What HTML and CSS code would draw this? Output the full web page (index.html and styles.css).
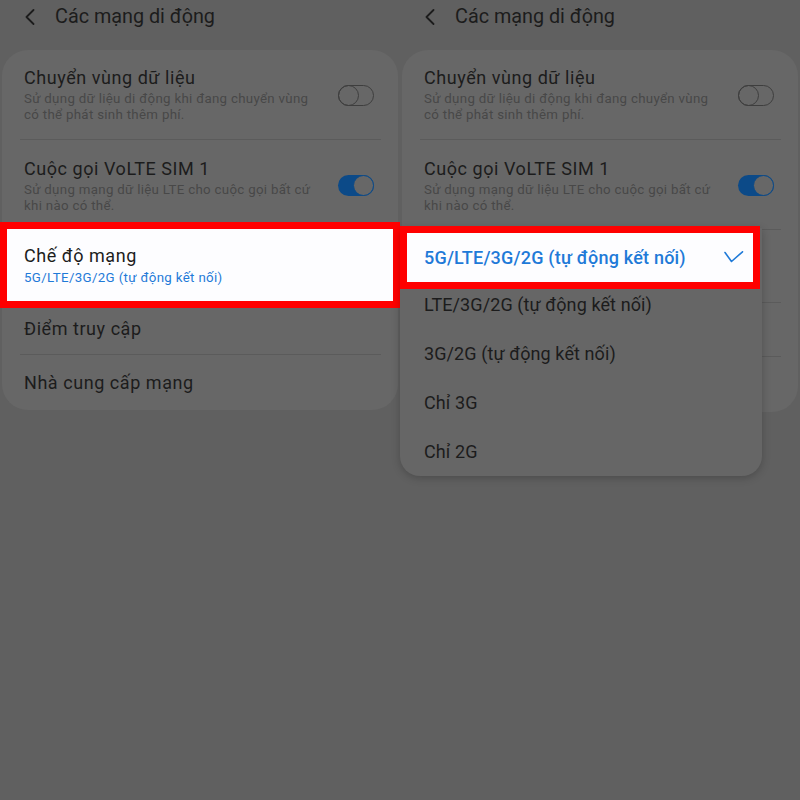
FILE: index.html
```html
<!DOCTYPE html>
<html lang="vi">
<head>
<meta charset="utf-8">
<title>Các mạng di động</title>
<link rel="stylesheet" href="styles.css">
</head>
<body>
<div class="screen">
  <section class="panel">
    <header class="header">
      <svg class="back" width="12" height="16" viewBox="0 0 12 16"><path d="M9.5 1 L2.5 8 L9.5 15" fill="none" stroke="#1c1c1c" stroke-width="1.8" stroke-linecap="round" stroke-linejoin="round"/></svg>
      <h1 class="title">Các mạng di động</h1>
    </header>
    <div class="card">
      <div class="row r1">
        <div class="text">
          <div class="main">Chuyển vùng dữ liệu</div>
          <div class="sub">Sử dụng dữ liệu di động khi đang chuyển vùng<br>có thể phát sinh thêm phí.</div>
        </div>
        <span class="toggle off"><span class="knob"></span></span>
      </div>
      <div class="divider"></div>
      <div class="row r2">
        <div class="text">
          <div class="main">Cuộc gọi VoLTE SIM 1</div>
          <div class="sub">Sử dụng mạng dữ liệu LTE cho cuộc gọi bất cứ<br>khi nào có thể.</div>
        </div>
        <span class="toggle on"><span class="knob"></span></span>
      </div>
      <div class="row r3 highlight">
        <div class="text">
          <div class="main">Chế độ mạng</div>
          <div class="sub blue">5G/LTE/3G/2G (tự động kết nối)</div>
        </div>
      </div>
      <div class="row r4"><div class="main">Điểm truy cập</div></div>
      <div class="divider"></div>
      <div class="row r5"><div class="main">Nhà cung cấp mạng</div></div>
    </div>
  </section>

  <section class="panel">
    <header class="header">
      <svg class="back" width="12" height="16" viewBox="0 0 12 16"><path d="M9.5 1 L2.5 8 L9.5 15" fill="none" stroke="#1c1c1c" stroke-width="1.8" stroke-linecap="round" stroke-linejoin="round"/></svg>
      <h1 class="title">Các mạng di động</h1>
    </header>
    <div class="card">
      <div class="row r1">
        <div class="text">
          <div class="main">Chuyển vùng dữ liệu</div>
          <div class="sub">Sử dụng dữ liệu di động khi đang chuyển vùng<br>có thể phát sinh thêm phí.</div>
        </div>
        <span class="toggle off"><span class="knob"></span></span>
      </div>
      <div class="divider"></div>
      <div class="row r2">
        <div class="text">
          <div class="main">Cuộc gọi VoLTE SIM 1</div>
          <div class="sub">Sử dụng mạng dữ liệu LTE cho cuộc gọi bất cứ<br>khi nào có thể.</div>
        </div>
        <span class="toggle on"><span class="knob"></span></span>
      </div>
      <div class="divider"></div>
      <div class="row r3 covered">
        <div class="text">
          <div class="main">Chế độ mạng</div>
          <div class="sub blue">5G/LTE/3G/2G (tự động kết nối)</div>
        </div>
      </div>
      <div class="divider"></div>
      <div class="row r4 covered"><div class="main">Điểm truy cập</div></div>
      <div class="divider"></div>
      <div class="row r5 covered"><div class="main">Nhà cung cấp mạng</div></div>
    </div>

    <div class="dropdown">
      <div class="item selected">
        <span>5G/LTE/3G/2G (tự động kết nối)</span>
        <svg class="check" width="20" height="12" viewBox="0 0 20 12"><path d="M1 1.5 L7.5 10.5 L18.5 0.8" fill="none" stroke="#1f7ad8" stroke-width="1.6" stroke-linecap="round" stroke-linejoin="round"/></svg>
      </div>
      <div class="item">LTE/3G/2G (tự động kết nối)</div>
      <div class="item">3G/2G (tự động kết nối)</div>
      <div class="item">Chỉ 3G</div>
      <div class="item">Chỉ 2G</div>
    </div>
  </section>
</div>
</body>
</html>
```

FILE: styles.css
```css
* { box-sizing: border-box; }
html, body { margin: 0; padding: 0; }
body {
  width: 800px;
  height: 800px;
  background: #606060;
  font-family: Roboto, "Noto Sans", "Liberation Sans", sans-serif;
  color: #1c1c1c;
  overflow: hidden;
}
.screen { display: flex; width: 800px; height: 800px; }
.panel { position: relative; width: 400px; height: 800px; }

.header {
  height: 50px;
  display: flex;
  align-items: flex-start;
  padding-top: 5px;
}
.back { margin: 4px 0 0 24px; flex: none; }
.title {
  margin: 0 0 0 19px;
  font-size: 19.8px;
  line-height: 24px;
  font-weight: 400;
  color: #1c1c1c;
}

.card {
  margin: 0 2px;
  background: #676767;
  border-radius: 26px;
  padding-bottom: 1px;
}
.row {
  display: flex;
  align-items: center;
  justify-content: space-between;
  padding: 0 24px 0 22px;
}
.text { display: flex; flex-direction: column; }
.main { font-size: 18px; line-height: 22px; letter-spacing: 0.55px; color: #1c1c1c; }
.sub { font-size: 13.3px; line-height: 16px; letter-spacing: 0.3px; color: #484848; margin-top: 2px; }
.sub.blue { color: #1f7ad8; margin-top: 3px; letter-spacing: 0.34px; }

.r1 { height: 89px; padding-top: 1px; }
.r2 { height: 89px; padding-top: 2px; }
.r3 { height: 72px; padding-top: 1px; }
.r4 { height: 53px; padding-top: 2px; }
.r5 { height: 54px; padding-top: 1px; }

.covered { visibility: hidden; }

.highlight {
  background: #fdfdff;
  margin: 0 5px;
  padding-left: 17px;
  outline: 7px solid #ff0000;
  position: relative;
}

.divider {
  height: 1px;
  background: #5b5b5b;
  margin: 0 17px 0 18px;
}

.toggle {
  width: 36px;
  height: 21px;
  border-radius: 11px;
  display: flex;
  align-items: center;
  flex: none;
}
.toggle.off { border: 1.5px solid #3e3e3e; justify-content: flex-start; }
.toggle.on { background: #0c4a88; justify-content: flex-end; }
.knob {
  width: 21px;
  height: 21px;
  border-radius: 50%;
  flex: none;
}
.toggle.off .knob { border: 1.5px solid #3e3e3e; margin-left: -1.5px; }
.toggle.on .knob { border: 1.5px solid #0c4a88; background: #676767; }

.dropdown {
  position: absolute;
  left: 0;
  top: 228px;
  width: 362px;
  padding-top: 5px;
  background: #666666;
  border-radius: 0 0 20px 20px;
  box-shadow: 0 2px 8px rgba(0,0,0,0.22);
}
.item {
  height: 49px;
  display: flex;
  align-items: center;
  padding: 0 24px;
  font-size: 18px;
  letter-spacing: 0.1px;
  color: #1c1c1c;
}
.item.selected {
  background: #fdfdff;
  margin: 0 9px 0 7px;
  padding: 0 11px 0 17px;
  justify-content: space-between;
  outline: 7px solid #ff0000;
  color: #1f7ad8;
  font-weight: 500;
  letter-spacing: 0.2px;
  position: relative;
}
.item:nth-child(2) { margin-top: -2px; }
.check { flex: none; margin-top: -2px; margin-right: -2px; }
```
